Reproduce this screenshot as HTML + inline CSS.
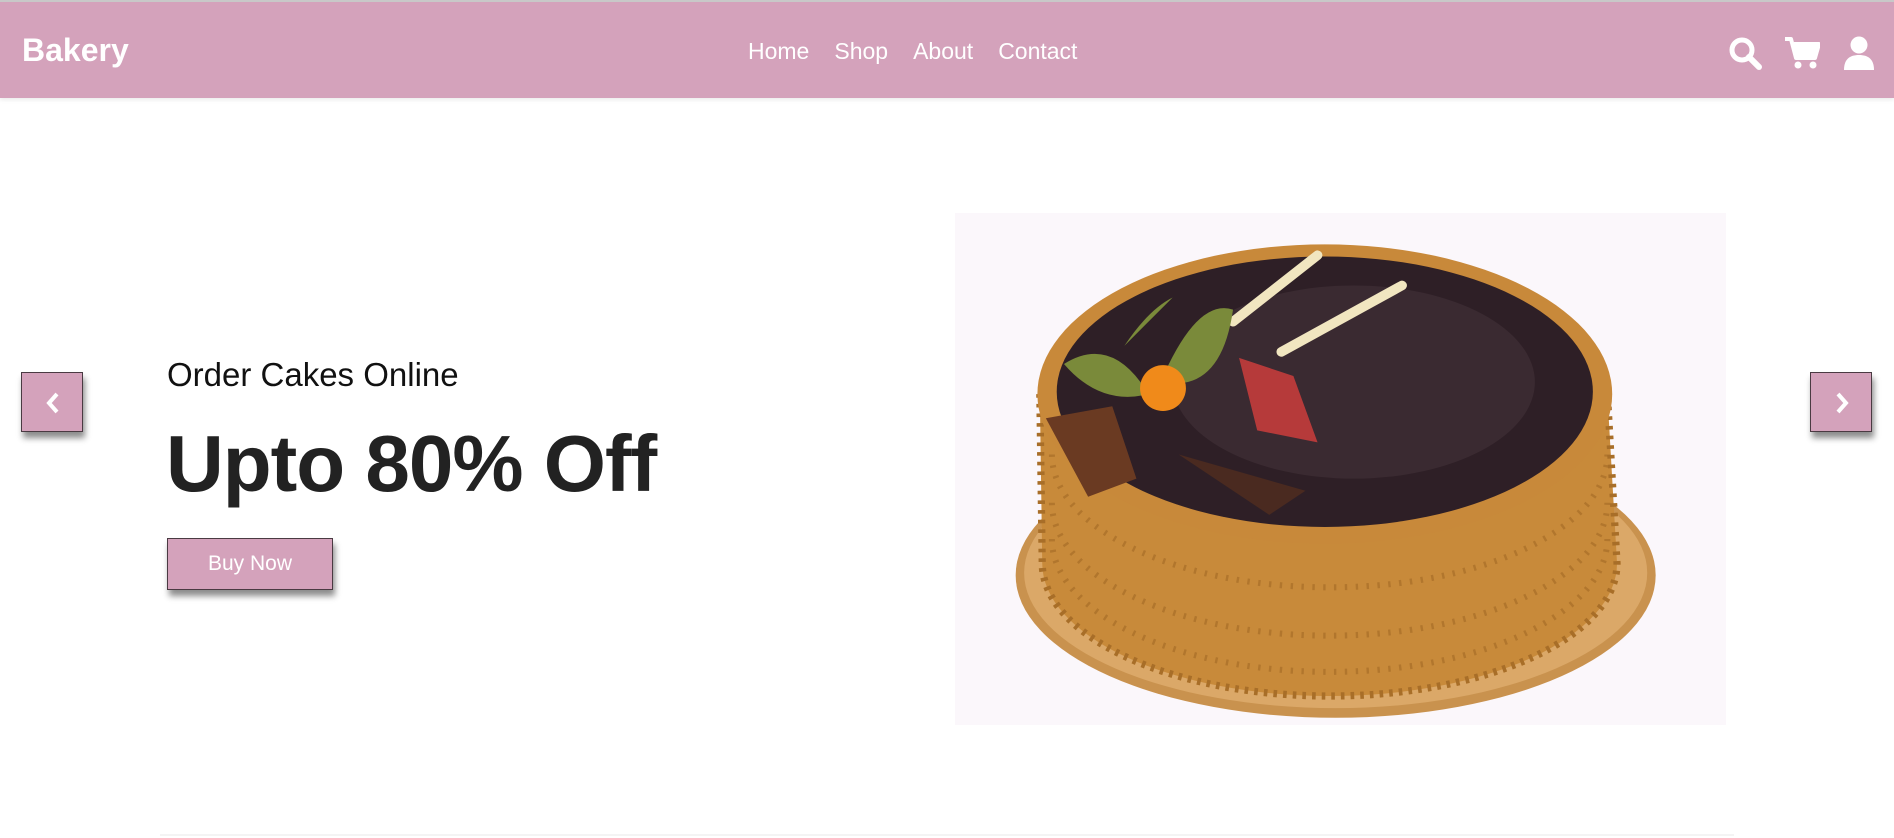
<!DOCTYPE html>
<html><head><meta charset="utf-8"><style>
*{margin:0;padding:0;box-sizing:border-box}
body{width:1894px;height:838px;background:#fff;font-family:"Liberation Sans",sans-serif;position:relative;overflow:hidden}
.hdr{position:absolute;left:0;top:0;width:1894px;height:98px;background:#d4a2bb;border-top:2px solid #c8c8c8;box-shadow:0 2px 4px rgba(0,0,0,.08)}
.logo{position:absolute;left:22px;top:30px;color:#fff;font-weight:bold;font-size:32px}
.nav{position:absolute;left:748px;top:36px;color:#fff;font-size:23px;word-spacing:0}
.nav span{margin-right:25px}
.ic{position:absolute;top:34px}
.arrow{position:absolute;width:62px;height:60px;background:#d4a2bb;border:1px solid #4a3a42;box-shadow:2px 6px 6px rgba(0,0,0,.45);top:372px}
.t1{position:absolute;left:167px;top:356px;font-size:33px;color:#111}
.t2{position:absolute;left:166px;top:418px;font-size:80px;font-weight:bold;color:#222;letter-spacing:-1px}
.btn{position:absolute;left:167px;top:538px;width:166px;height:52px;background:#d4a2bb;border:1px solid #4a3a42;box-shadow:2px 6px 6px rgba(0,0,0,.45);color:#fff;font-size:21px;text-align:center;line-height:50px}
.img{position:absolute;left:955px;top:213px;width:771px;height:512px;background:#fbf7fb}
</style></head><body>
<div class="hdr">
 <div class="logo">Bakery</div>
 <div class="nav"><span>Home</span><span>Shop</span><span>About</span><span>Contact</span></div>
 <svg class="ic" style="left:1728px" width="34" height="34" viewBox="0 0 34 34"><circle cx="14" cy="14" r="10" fill="none" stroke="#fff" stroke-width="5"/><line x1="21" y1="21" x2="31" y2="31" stroke="#fff" stroke-width="6" stroke-linecap="round"/></svg>
 <svg class="ic" style="left:1784px" width="36" height="34" viewBox="0 0 36 34"><path d="M1 3h6l5 19h19l4-14H10" fill="none" stroke="#fff" stroke-width="4" stroke-linejoin="round"/><path d="M10 8h25l-4 14H12z" fill="#fff"/><circle cx="14" cy="29" r="3.5" fill="#fff"/><circle cx="29" cy="29" r="3.5" fill="#fff"/></svg>
 <svg class="ic" style="left:1843px" width="32" height="34" viewBox="0 0 32 34"><circle cx="16" cy="9" r="8.5" fill="#fff"/><path d="M1 34c0-11 6-15 15-15s15 4 15 15z" fill="#fff"/></svg>
</div>
<div class="arrow" style="left:21px"><svg width="62" height="60" viewBox="0 0 62 60"><path d="M35 21l-8 9 8 9" fill="none" stroke="#fff" stroke-width="4"/></svg></div>
<div class="arrow" style="left:1810px"><svg width="62" height="60" viewBox="0 0 62 60"><path d="M27 21l8 9-8 9" fill="none" stroke="#fff" stroke-width="4"/></svg></div>
<div class="t1">Order Cakes Online</div>
<div class="t2">Upto 80% Off</div>
<div class="btn">Buy Now</div>
<div class="img"><svg width="771" height="512" viewBox="0 0 638 424">
 <ellipse cx="315" cy="300" rx="265" ry="118" fill="#c9924e"/>
 <ellipse cx="315" cy="298" rx="258" ry="112" fill="#dba868"/>
 <path d="M70 150 L72 290 A238 110 0 0 0 548 290 L540 150 Z" fill="#c88a3a"/>
 <path d="M70 150 L72 290 A238 110 0 0 0 548 290 L540 150 Z" fill="none" stroke="#a86e28" stroke-width="6" stroke-dasharray="3 5"/>
 <g fill="none" stroke="#a86e28" stroke-width="5" stroke-dasharray="2 7" opacity=".7">
  <path d="M80 200 A230 110 0 0 0 540 200"/><path d="M80 240 A230 110 0 0 0 540 240"/><path d="M80 270 A230 110 0 0 0 540 270"/>
 </g>
 <ellipse cx="306" cy="150" rx="238" ry="124" fill="#c8893a"/>
 <ellipse cx="306" cy="148" rx="222" ry="112" fill="#2e1f26"/>
 <ellipse cx="330" cy="140" rx="150" ry="80" fill="#3a2a31"/>
 <path d="M230 90 L300 35 M270 115 L370 60" stroke="#f1e6c0" stroke-width="8" stroke-linecap="round"/>
 <path d="M90 125 Q130 100 160 150 Q120 160 90 125Z M170 140 Q200 70 230 80 Q220 150 170 140Z M140 110 Q160 80 180 70" fill="#7a8a3a"/>
 <circle cx="172" cy="145" r="19" fill="#f08a1a"/>
 <path d="M235 120 L280 135 L300 190 L250 180Z" fill="#b63a3a"/>
 <path d="M75 170 L130 160 L150 220 L110 235Z" fill="#6a3a22"/>
 <path d="M185 200 L290 230 L260 250 Z" fill="#4a2a20"/>
</svg></div>
<div style="position:absolute;left:160px;right:160px;top:834px;height:2px;background:#f4f4f4"></div>
</body></html>
